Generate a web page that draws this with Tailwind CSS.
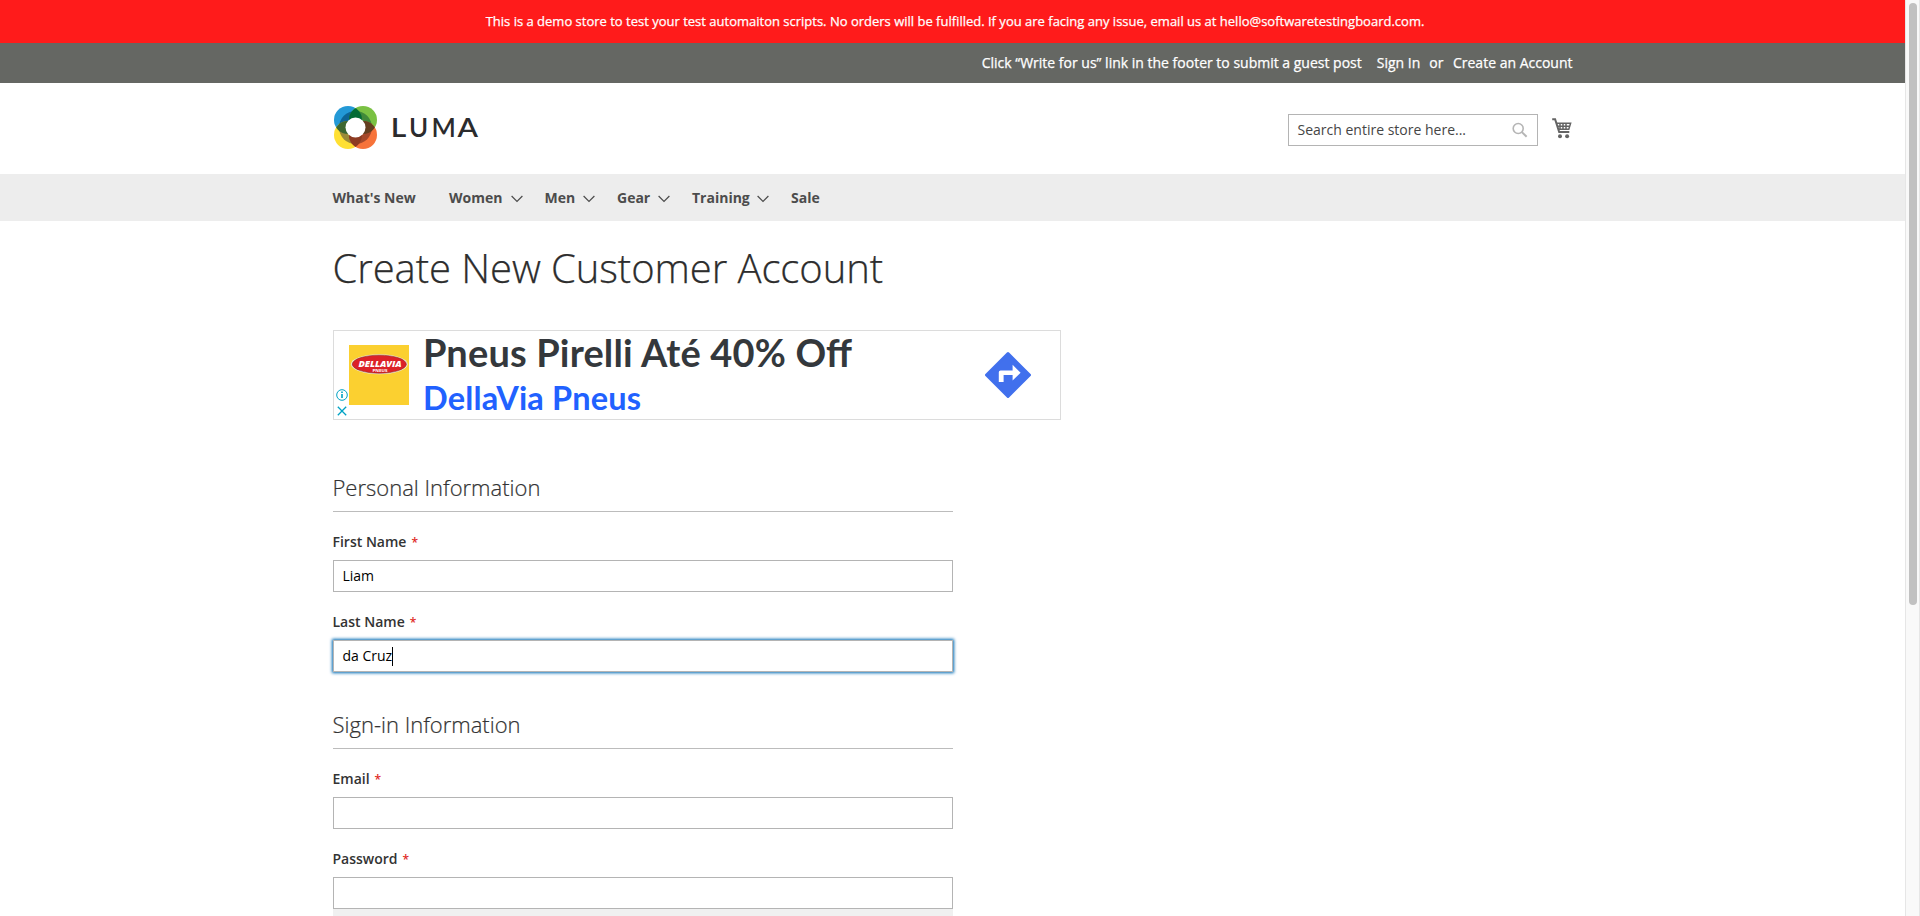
<!DOCTYPE html>
<html lang="en">
<head>
<meta charset="utf-8">
<title>Create New Customer Account</title>
<script src="https://cdn.jsdelivr.net/npm/@tailwindcss/browser@4"></script>
</head>
<body class="h-[916px] overflow-hidden bg-white font-['Open_Sans','Noto_Sans',sans-serif] text-sm text-[#333333]">
<div class="flex h-full">
  <div class="flex h-full min-w-0 flex-1 flex-col overflow-hidden">
    <div class="flex h-[43px] shrink-0 items-center justify-center bg-[#ff1b1b] pl-[5px] text-[13px] text-white [-webkit-text-stroke:0.25px]"><p class="whitespace-nowrap">This is a demo store to test your test automaiton scripts. No orders will be fulfilled. If you are facing any issue, email us at hello@softwaretestingboard.com.</p></div>
    <div class="h-10 shrink-0 bg-[#656763] text-white [-webkit-text-stroke:0.25px]">
      <div class="mx-auto flex h-full w-[1240px] items-center justify-end pb-px whitespace-nowrap">
        <span class="mr-[15px]">Click “Write for us” link in the footer to submit a guest post</span>
        <a>Sign In</a><span class="mr-[9.5px] ml-[9px]">or</span><a>Create an Account</a>
      </div>
    </div>
    <header class="mx-auto flex h-[91px] w-[1240px] shrink-0 items-start">
      <svg class="mt-5 h-[50px] w-[148px] overflow-visible" viewBox="0 0 148 50">
        <g transform="translate(0 2)">
          <circle cx="15" cy="15" r="14" fill="#2399d6"/>
          <circle cx="30" cy="15" r="14" fill="#7ac143"/>
          <circle cx="15" cy="30" r="14" fill="#ffe033"/>
          <circle cx="30" cy="30" r="14" fill="#f7733a"/>
          <clipPath id="tl"><circle cx="15" cy="15" r="14"/></clipPath>
          <clipPath id="br"><circle cx="30" cy="30" r="14"/></clipPath>
          <clipPath id="ring"><circle cx="22.5" cy="22.5" r="16.5"/></clipPath>
          <g clip-path="url(#ring)">
            <circle cx="15" cy="15" r="14" fill="#0d6494"/>
            <circle cx="30" cy="15" r="14" fill="#40893a"/>
            <circle cx="15" cy="30" r="14" fill="#9b8a38"/>
            <circle cx="30" cy="30" r="14" fill="#a5482a"/>
          </g>
          <g clip-path="url(#tl)"><circle cx="30" cy="15" r="14" fill="#026b35"/><circle cx="15" cy="30" r="14" fill="#3d6631"/></g>
          <g clip-path="url(#br)"><circle cx="30" cy="15" r="14" fill="#633f20"/><circle cx="15" cy="30" r="14" fill="#8d3b22"/></g>
          <circle cx="22.5" cy="22.5" r="10" fill="#fff"/>
        </g>
        <g class="font-['Lato',sans-serif] text-[26px] font-semibold" fill="#2b2b2d"><text x="57.8" y="33.5" textLength="15.5" lengthAdjust="spacingAndGlyphs">L</text><text x="76" y="33.5">U</text><text x="98.5" y="33.5">M</text><text x="124.5" y="33.5" textLength="20.5" lengthAdjust="spacingAndGlyphs">A</text></g>
      </svg>
      <div class="mt-[31px] ml-auto flex h-8 w-[250px] items-center justify-between border border-[#b4b4b4] pr-[9px] pl-[9px]">
        <span class="text-[#454545]">Search entire store here...</span>
        <svg class="h-4 w-4" viewBox="0 0 16 16" fill="none" stroke="#b5b5b5"><circle cx="6.2" cy="6.5" r="5" stroke-width="1.6"/><path d="M9.9 10.1 14.6 14.7" stroke-width="2"/></svg>
      </div>
      <svg class="mt-[35px] mr-px ml-[14px] h-[21px] w-5" viewBox="0 0 20 21" fill="none" stroke="#646464"><path d="M.2 1.2h2.9L7.2 14H17.3" stroke-width="2"/><path d="M4.4 5.3H18.6L16.8 11.2H6.2M5.3 8.2H17.7M8 5v6.5M11 5v6.5M14 5v6.5" stroke-width="1.5"/><circle cx="8" cy="18.2" r="2" fill="#646464" stroke="none"/><circle cx="15.1" cy="18.2" r="2" fill="#646464" stroke="none"/></svg>
    </header>
    <nav class="h-[47px] shrink-0 bg-[#ededed] font-bold text-[#4c4c4c]">
      <div class="mx-auto flex h-full w-[1240px] items-center">
        <a class="w-[116.5px]">What's New</a>
        <a class="flex w-[95.5px] items-center justify-between pr-[22px]">Women<svg class="mt-[3px] h-2 w-3" viewBox="0 0 12 8" fill="none" stroke="#4c4c4c" stroke-width="1.2"><path d="M.6 1 6 6.5 11.4 1"/></svg></a>
        <a class="flex w-[72.5px] items-center justify-between pr-[22px]">Men<svg class="mt-[3px] h-2 w-3" viewBox="0 0 12 8" fill="none" stroke="#4c4c4c" stroke-width="1.2"><path d="M.6 1 6 6.5 11.4 1"/></svg></a>
        <a class="flex w-[75px] items-center justify-between pr-[22px]">Gear<svg class="mt-[3px] h-2 w-3" viewBox="0 0 12 8" fill="none" stroke="#4c4c4c" stroke-width="1.2"><path d="M.6 1 6 6.5 11.4 1"/></svg></a>
        <a class="flex w-[99px] items-center justify-between pr-[22px]">Training<svg class="mt-[3px] h-2 w-3" viewBox="0 0 12 8" fill="none" stroke="#4c4c4c" stroke-width="1.2"><path d="M.6 1 6 6.5 11.4 1"/></svg></a>
        <a>Sale</a>
      </div>
    </nav>
    <main class="mx-auto w-[1240px] shrink-0">
      <h1 class="pt-[19px] text-[40px] leading-[55px] font-light tracking-[-0.08px] text-[#2d2d2d] [-webkit-text-stroke:0.25px]">Create New Customer Account</h1>
      <div class="mt-[35px] ml-[0.5px] flex h-[90px] w-[728px] border border-[#dcdcdc]">
        <div class="flex w-[15px] flex-col items-center justify-end gap-1 pb-[2px]">
          <svg class="h-3 w-3" viewBox="0 0 12 12" fill="none" stroke="#00a2c4"><circle cx="6" cy="6" r="5.3"/><path d="M6 5v4M6 2.6v1.3" stroke-width="1.6"/></svg>
          <svg class="h-3 w-3" viewBox="0 0 12 12" stroke="#00a2c4" stroke-width="1.3"><path d="M1.8 1.8 10.2 10.2M10.2 1.8 1.8 10.2"/></svg>
        </div>
        <svg class="mt-[14px] h-[60px] w-[60px] bg-[#fbd030]" viewBox="0 0 60 60">
          <ellipse cx="30.3" cy="19.2" rx="28.4" ry="10" fill="#eee9d9"/><ellipse cx="30.3" cy="19.2" rx="27" ry="9" fill="#dc2128" stroke="#8d2920" stroke-width=".6"/>
          <text x="9.5" y="21.5" textLength="43" lengthAdjust="spacingAndGlyphs" fill="#fff" class="font-['Open_Sans',sans-serif] text-[8.5px] font-extrabold italic">DELLAVIA</text>
          <text x="23.5" y="26.5" textLength="15" lengthAdjust="spacingAndGlyphs" fill="#fff" class="font-['Open_Sans',sans-serif] text-[4px] font-bold">PNEUS</text>
        </svg>
        <svg class="h-[88px] w-[450px] overflow-visible" viewBox="0 0 450 88"><g class="font-['Lato',sans-serif] font-bold"><text x="14" y="36.3" textLength="429" fill="#34383c" class="text-[38px]">Pneus Pirelli Até 40% Off</text><text x="14" y="78.5" textLength="218" fill="#2161ff" class="text-[32.5px]">DellaVia Pneus</text></g></svg>
        <svg class="mt-[20px] mr-[28.5px] ml-auto h-[48px] w-[48px]" viewBox="0 0 48 48"><path d="M24 2.5 45.5 24 24 45.5 2.5 24Z" fill="#4170ed" stroke="#4170ed" stroke-width="3" stroke-linejoin="round"/><path d="M14.8 31V21.2Q14.8 19.4 16.6 19.4H28.6V13.8L36.6 21.7 28.6 29.6V24H19.6V31Z" fill="#fff"/></svg>
      </div>
      <form class="w-[620px]">
        <h2 class="mt-[52px] h-10 border-b border-[#bcbcbc] text-[22px] leading-[30px] font-light [-webkit-text-stroke:0.2px]">Personal Information</h2>
        <label class="mt-5 block h-[28px] leading-5 font-semibold text-[#333]">First Name<span class="ml-[5px] text-xs font-semibold text-[#e02b27]">*</span></label>
        <div class="flex h-8 items-center border border-[#b4b4b4] pl-[9px] text-black">Liam</div>
        <label class="mt-5 block h-[28px] leading-5 font-semibold text-[#333]">Last Name<span class="ml-[5px] text-xs font-semibold text-[#e02b27]">*</span></label>
        <div class="flex h-8 items-center border border-[#b4b4b4] pl-[9px] text-black shadow-[0_0_3px_1px_#006bb4]">da Cruz<span class="h-[19px] w-px bg-black"></span></div>
        <h2 class="mt-[37px] h-10 border-b border-[#bcbcbc] text-[22px] leading-[30px] font-light [-webkit-text-stroke:0.2px]">Sign-in Information</h2>
        <label class="mt-5 block h-[28px] leading-5 font-semibold text-[#333]">Email<span class="ml-[5px] text-xs font-semibold text-[#e02b27]">*</span></label>
        <div class="h-8 border border-[#b4b4b4]"></div>
        <label class="mt-5 block h-[28px] leading-5 font-semibold text-[#333]">Password<span class="ml-[5px] text-xs font-semibold text-[#e02b27]">*</span></label>
        <div class="h-8 border border-[#b4b4b4]"></div>
        <div class="h-8 bg-[#f0f0f0]"></div>
      </form>
    </main>
  </div>
  <div class="h-full w-[15px] border-x border-[#e6e6e6] bg-[#f9f9f9] pt-[3px] pl-[3px]"><div class="h-[602px] w-2 rounded-full bg-[#c1c1c1]"></div></div>
</div>
</body>
</html>
